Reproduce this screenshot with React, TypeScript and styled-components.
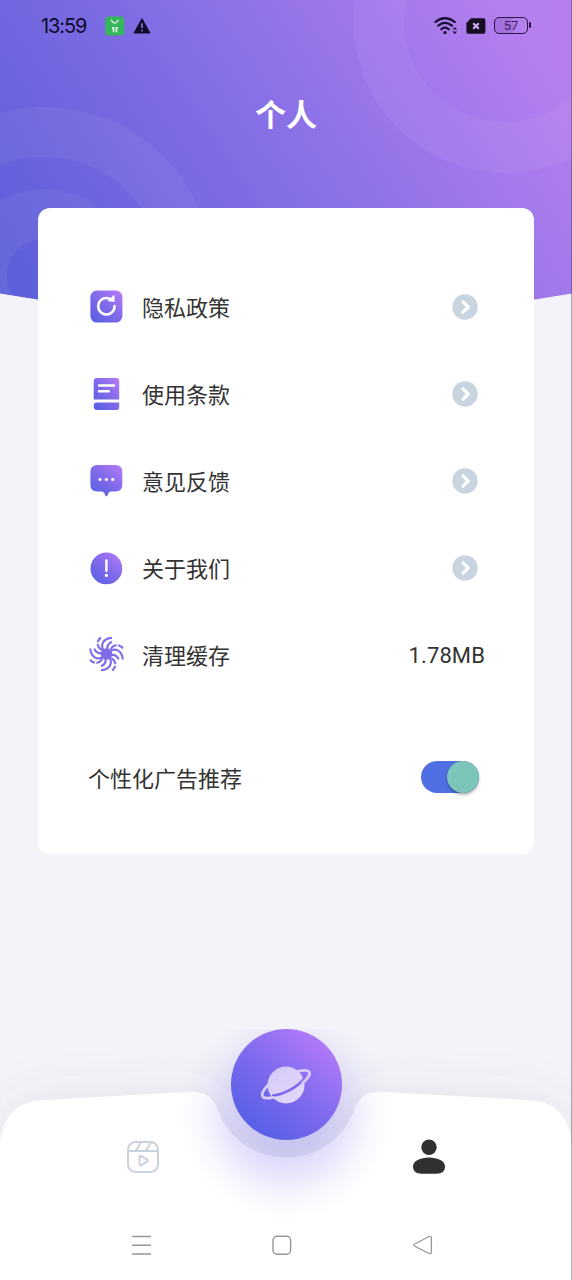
import React from "react";
import styled, { createGlobalStyle } from "styled-components";

const GlobalStyle = createGlobalStyle`
  body { margin: 0; background: #f3f3f9; }
  * { box-sizing: border-box; }
`;

const Screen = styled.main`
  position: relative;
  display: flex;
  flex-direction: column;
  width: 572px;
  height: 1280px;
  overflow: hidden;
  background: #f3f3f9;
  color: #333;
  font-family: Roboto, "Noto Sans CJK SC", sans-serif;
`;

const ScreenEdge = styled.i`
  position: absolute;
  top: 0;
  right: 0;
  width: 1px;
  height: 100%;
  background: rgba(50, 50, 60, 0.4);
`;

const HeaderArt = styled.svg`
  position: absolute;
  top: 0;
  left: 0;
`;

const StatusBar = styled.header`
  position: relative;
  display: flex;
  align-items: center;
  justify-content: space-between;
  height: 51px;
  padding: 0 42px 0 41px;
`;

const StatusGroup = styled.div<{ $gap: number }>`
  display: flex;
  align-items: center;
  gap: ${(p) => p.$gap}px;
`;

const Clock = styled.span`
  width: 56px;
  color: #0e0a2a;
  font: 400 20px/24px Inter, sans-serif;
  letter-spacing: -1.1px;
`;

const Battery = styled.div`
  position: relative;
  width: 34px;
  height: 17px;
  margin-right: 2px;
  border: 1.5px solid #2a1745;
  border-radius: 5px;
  background: linear-gradient(90deg, rgba(80, 40, 140, 0.16) 55%, transparent 55%);
  color: #3b2460;
  font: 400 13px/15px Roboto, sans-serif;
  text-align: center;

  &::after {
    content: "";
    position: absolute;
    top: 4px;
    right: -4px;
    width: 2px;
    height: 6px;
    border-radius: 1px;
    background: #2a1745;
  }
`;

const Title = styled.h1`
  position: relative;
  height: 46px;
  margin: 39px 0 72px;
  color: #fff;
  font: 700 31px/46px "Noto Sans CJK SC", sans-serif;
  text-align: center;
`;

const Card = styled.section`
  position: relative;
  width: 496px;
  height: 646px;
  margin-left: 38px;
  padding: 55px 49px 0 50px;
  border-radius: 12px;
  background: #fff;
`;

const Menu = styled.ul`
  display: flex;
  flex-direction: column;
  margin: 0;
  padding: 0;
  list-style: none;
`;

const MenuRow = styled.li`
  display: flex;
  align-items: center;
  height: 87.2px;
`;

const RowIcon = styled.svg`
  flex: none;
  width: 36px;
  height: 36px;
  margin-right: 18px;
`;

const RowLabel = styled.span`
  flex: 1;
  padding-top: 4px;
  font-size: 22px;
  line-height: 32px;
`;

const CacheSize = styled.span`
  padding-top: 2px;
  font-size: 22px;
  line-height: 32px;
  letter-spacing: 0.1px;
`;

const ArrowIcon = styled.svg`
  width: 26px;
  height: 26px;
  margin-right: 7px;
`;

const SwitchRow = styled.div`
  display: flex;
  align-items: center;
  height: 60px;
  margin-top: 49px;
`;

const Switch = styled.button`
  display: flex;
  justify-content: flex-end;
  width: 58px;
  height: 32px;
  margin: 0 6px 1px 0;
  padding: 0;
  border: 0;
  border-radius: 16px;
  background: #506fe3;
`;

const Knob = styled.span`
  width: 32px;
  height: 32px;
  border-radius: 50%;
  background: #7cc5bb;
  box-shadow: 0 2px 3px rgba(0, 0, 0, 0.3);
`;

const Dock = styled.footer`
  position: relative;
  display: flex;
  flex-direction: column;
  height: 260px;
  margin-top: auto;
`;

const DockArt = styled.svg`
  position: absolute;
  left: 0;
  bottom: 0;
  overflow: visible;
`;

const Tabs = styled.nav`
  position: relative;
  display: grid;
  grid-template-columns: repeat(3, 1fr);
  height: 190px;
  padding: 0 71.5px;
`;

const Tab = styled.button<{ $color: string }>`
  display: flex;
  justify-content: center;
  align-items: flex-start;
  padding: 119px 0 0;
  border: 0;
  background: none;
  color: ${(p) => p.$color};
`;

const ExploreButton = styled.button`
  display: flex;
  align-items: center;
  justify-content: center;
  justify-self: center;
  width: 111px;
  height: 111px;
  margin-top: 9px;
  padding: 0;
  border: 0;
  border-radius: 50%;
  background: linear-gradient(40deg, #5560e6 12%, #7f6aee 50%, #b67bfb 90%);
`;

const SystemNav = styled.div`
  position: relative;
  display: flex;
  align-items: center;
  justify-content: space-between;
  height: 70px;
  padding: 2px 138px 0 130px;
`;

const Gradient = ({ id }: { id: string }) => (
  <defs>
    <linearGradient id={id} x1="0.1" y1="0.95" x2="0.9" y2="0.05">
      <stop offset="0" stopColor="#5b60e3" />
      <stop offset="0.5" stopColor="#7e6aea" />
      <stop offset="1" stopColor="#b078f5" />
    </linearGradient>
  </defs>
);

const PrivacyIcon = () => (
  <RowIcon viewBox="0 0 36 36">
    <Gradient id="privacy" />
    <rect x="2.4" y="1.6" width="32" height="32" rx="6.5" fill="url(#privacy)" />
    <path d="M21.4 9.6A8.2 8.2 0 1 0 26.6 17" fill="none" stroke="#fff" strokeWidth="2.5" strokeLinecap="round" />
    <path d="M20.6 11.6L26 6.8V12.2Z" fill="#fff" stroke="#fff" strokeWidth="1.2" strokeLinejoin="round" />
  </RowIcon>
);

const TermsIcon = () => (
  <RowIcon viewBox="0 0 36 36">
    <Gradient id="terms" />
    <path d="M9 2H28.5Q31.2 2 31.2 5V23.5H5.7V5.5Q5.7 2 9 2ZM8.5 26.4H31.2V31Q31.2 34 28.5 34H9Q5.7 34 5.7 30.6Q5.7 26.4 8.5 26.4Z" fill="url(#terms)" />
    <path d="M11 9.5H26M11 15.2H20.8" stroke="#fff" strokeWidth="2.4" strokeLinecap="round" />
  </RowIcon>
);

const FeedbackIcon = () => (
  <RowIcon viewBox="0 0 36 36">
    <Gradient id="feedback" />
    <path d="M9.5 2H27.3Q34.3 2 34.3 9V21.5Q34.3 28.5 27.3 28.5H23Q21.3 28.5 20.5 30L19.3 32.7Q18.4 34 17.4 32.7L16.2 30Q15.4 28.5 13.8 28.5H9.5Q2.4 28.5 2.4 21.5V9Q2.4 2 9.5 2Z" fill="url(#feedback)" />
    <g fill="#fff">
      <circle cx="12" cy="16.5" r="1.6" />
      <circle cx="18.4" cy="16.5" r="1.6" />
      <circle cx="24.8" cy="16.5" r="1.6" />
    </g>
  </RowIcon>
);

const AboutIcon = () => (
  <RowIcon viewBox="0 0 36 36">
    <Gradient id="about" />
    <circle cx="18.4" cy="18.4" r="15.9" fill="url(#about)" />
    <path d="M18.4 10.5V20.8" stroke="#fff" strokeWidth="2.4" strokeLinecap="round" />
    <circle cx="18.4" cy="25.4" r="1.6" fill="#fff" />
  </RowIcon>
);

const CacheIcon = () => (
  <RowIcon viewBox="0 0 36 36">
    <g transform="translate(18.5 17)" fill="none" stroke="#806eea" strokeWidth="2.2" strokeLinecap="round">
      <circle r="5.8" fill="#7d6be8" stroke="none" />
      {[0, 90, 180, 270].map((angle) => (
        <g key={angle} transform={`rotate(${angle})`}>
          <path d="M-3 -3.5C-6.4 -9.5 -3 -15.2 4.6 -16.2" />
          <path d="M.8 -5C.6 -8 2 -10.5 4.6 -11.8" />
          <path d="M4.4 -5.4C7.4 -9.6 12.4 -10.2 16.2 -6" strokeDasharray="6 3.3 4 3" />
        </g>
      ))}
    </g>
  </RowIcon>
);

const ITEMS = [
  { label: "隐私政策", Icon: PrivacyIcon },
  { label: "使用条款", Icon: TermsIcon },
  { label: "意见反馈", Icon: FeedbackIcon },
  { label: "关于我们", Icon: AboutIcon },
  { label: "清理缓存", Icon: CacheIcon, value: "1.78MB" },
];

const Arrow = () => (
  <ArrowIcon viewBox="0 0 26 26">
    <circle cx="13" cy="13" r="12.7" fill="#c9d4e1" />
    <path d="M11 7.8L16.2 13L11 18.2" fill="none" stroke="#fff" strokeWidth="3.2" strokeLinecap="round" strokeLinejoin="round" />
  </ArrowIcon>
);

export default function App() {
  return (
    <>
      <GlobalStyle />
      <Screen>
        <HeaderArt width="572" height="320" viewBox="0 0 572 320">
          <defs>
            <linearGradient id="sky" gradientUnits="userSpaceOnUse" x1="40" y1="300" x2="500" y2="-10">
              <stop offset="0" stopColor="#5e5fda" />
              <stop offset="0.5" stopColor="#866fe6" />
              <stop offset="1" stopColor="#b57fee" />
            </linearGradient>
            <clipPath id="wave">
              <path d="M0 0H572V293.5Q286 342 0 293.5Z" />
            </clipPath>
          </defs>
          <g clipPath="url(#wave)">
            <rect width="572" height="320" fill="url(#sky)" />
            <g fill="none" stroke="#fff" strokeOpacity="0.05">
              <circle cx="44" cy="276" r="144" strokeWidth="50" />
              <circle cx="44" cy="276" r="62" strokeWidth="50" />
              <circle cx="505" cy="21" r="126.5" strokeWidth="51" />
            </g>
          </g>
        </HeaderArt>

        <StatusBar>
          <StatusGroup $gap={8}>
            <Clock>13:59</Clock>
            <svg width="20" height="20" viewBox="0 0 20 20">
              <rect x="0.3" y="0.5" width="19" height="19" rx="4" fill="#35b65c" />
              <path d="M6.2 4.2Q9.8 10 13.4 4.2" fill="none" stroke="#dff8df" strokeWidth="1.3" strokeLinecap="round" />
              <path d="M7 11H9.3V16.2H7.7V13H7ZM10.5 11H12.8V12.8H12.4V16.2H10.5Z" fill="#dff8df" />
            </svg>
            <svg width="18" height="16" viewBox="0 0 18 16">
              <path d="M9 .8L17 15H1Z" fill="#100b2b" stroke="#100b2b" strokeWidth="1" strokeLinejoin="round" />
              <path d="M9 5.2V10M9 11.7V13.3" stroke="#8975e6" strokeWidth="1.7" />
            </svg>
          </StatusGroup>
          <StatusGroup $gap={8}>
            <svg width="24" height="18" viewBox="0 0 24 18">
              <g fill="none" stroke="#170d30" strokeWidth="2.2" strokeLinecap="round">
                <path d="M1.4 5Q11 -2.6 20.8 5" />
                <path d="M4.2 8.7Q11 3.2 18 8.7" />
                <path d="M7.3 12.3Q11 9 14.8 12.3" />
              </g>
              <circle cx="11" cy="15.6" r="1.7" fill="#170d30" />
              <path d="M18.4 12.6L20.8 10L23.2 12.6ZM18.4 14.5L20.8 17.2L23.2 14.5Z" fill="#2b1848" />
            </svg>
            <svg width="20" height="16" viewBox="0 0 20 16">
              <path d="M5 .3H17.6Q19.4 .3 19.4 2V14Q19.4 15.8 17.6 15.8H2.2Q.4 15.8 .4 14V5Z" fill="#170d20" />
              <path d="M7.2 5.2L12.8 10.8M12.8 5.2L7.2 10.8" stroke="#c9aaf0" strokeWidth="2.2" />
            </svg>
            <Battery>57</Battery>
          </StatusGroup>
        </StatusBar>

        <Title>个人</Title>

        <Card>
          <Menu>
            {ITEMS.map(({ label, Icon, value }) => (
              <MenuRow key={label}>
                <Icon />
                <RowLabel>{label}</RowLabel>
                {value ? <CacheSize>{value}</CacheSize> : <Arrow />}
              </MenuRow>
            ))}
          </Menu>
          <SwitchRow>
            <RowLabel>个性化广告推荐</RowLabel>
            <Switch role="switch" aria-checked="true">
              <Knob />
            </Switch>
          </SwitchRow>
        </Card>

        <Dock>
          <DockArt width="572" height="260" viewBox="0 0 572 260">
            <defs>
              <filter id="soft" x="-20%" y="-50%" width="140%" height="200%">
                <feGaussianBlur stdDeviation="24" />
              </filter>
              <radialGradient id="glow" gradientUnits="userSpaceOnUse" cx="286" cy="94" r="106">
                <stop offset="0.3" stopColor="#6a5fe8" stopOpacity="0.28" />
                <stop offset="0.55" stopColor="#6a5fe8" stopOpacity="0.17" />
                <stop offset="0.8" stopColor="#6a5fe8" stopOpacity="0.05" />
                <stop offset="1" stopColor="#6a5fe8" stopOpacity="0" />
              </radialGradient>
              <path id="dock" d="M0 260V124C2 98 16 82 40 80.3L190 71.8C203 71 212 75 217.5 89C227 117 253 137.5 286 137.5C319 137.5 345 117 354.5 89C360 75 369 71 382 71.8L532 80.3C556 82 570 98 572 124V260Z" />
            </defs>
            <use href="#dock" fill="#555560" fillOpacity="0.1" filter="url(#soft)" />
            <use href="#dock" fill="#fff" />
            <rect x="176" y="9" width="220" height="191" fill="url(#glow)" />
          </DockArt>
          <Tabs>
            <Tab $color="#cad2de" aria-label="视频">
              <svg width="36" height="36" viewBox="0 0 36 36" fill="none" stroke="currentColor" strokeWidth="2" strokeLinecap="round" strokeLinejoin="round">
                <rect x="3" y="3" width="30" height="30" rx="7.5" />
                <path d="M3.5 12H32.5M11 11.5L16 3.5M21 11.5L26 3.5" />
                <path d="M14.5 17.8Q14.5 16.3 16 16.8L22.2 20.6Q23.5 21.6 22.2 22.6L16.5 26.2Q14.7 27 14.5 25.2Z" />
              </svg>
            </Tab>
            <ExploreButton aria-label="发现">
              <svg width="54" height="42" viewBox="0 0 54 42">
                <defs>
                  <linearGradient id="planet" x1="0" y1="0" x2="1" y2="1">
                    <stop offset="0" stopColor="#d2c9f7" />
                    <stop offset="1" stopColor="#e6d9fc" />
                  </linearGradient>
                  <mask id="ringCut">
                    <rect width="54" height="42" fill="#fff" />
                    <path d="M13 31.8C24 30.6 38 23.6 45.2 14.6" fill="none" stroke="#000" strokeWidth="2.6" />
                  </mask>
                </defs>
                <g mask="url(#ringCut)">
                  <circle cx="27" cy="21" r="18.5" fill="url(#planet)" />
                </g>
                <path d="M9.8 20.2C4.6 25.6 2.2 30.4 3.8 32.6C5.2 34.6 9 34.6 14 33.4M37.8 7.6C44 6 48.4 5.6 50 7.6C51.6 9.9 49 14.5 43.8 19" fill="none" stroke="#d8cdf8" strokeWidth="2.8" strokeLinecap="round" />
              </svg>
            </ExploreButton>
            <Tab $color="#303030" aria-label="个人">
              <svg width="36" height="38" viewBox="0 0 36 38" fill="currentColor">
                <circle cx="18" cy="8.2" r="7.7" />
                <path d="M18 18.5C27 18.5 34 22 34 27.5C34 32.6 30.5 34.7 25.5 34.7H10.5C5.5 34.7 2 32.6 2 27.5C2 22 9 18.5 18 18.5Z" />
              </svg>
            </Tab>
          </Tabs>
          <SystemNav>
            <svg width="22" height="22" viewBox="0 0 22 22" stroke="#969696" strokeWidth="1.4">
              <path d="M2 1.5H21M2 10.2H21M2 19H21" />
            </svg>
            <svg width="22" height="22" viewBox="0 0 22 22" fill="none" stroke="#969696" strokeWidth="1.4">
              <rect x="2" y="1.3" width="17.6" height="18" rx="4" />
            </svg>
            <svg width="22" height="22" viewBox="0 0 22 22" fill="none" stroke="#969696" strokeWidth="1.3" strokeLinejoin="round">
              <path d="M2.4 9.2L17 1.5Q19.4 .7 19.4 3V17Q19.4 19.3 17 18.5L2.4 11Q.8 10.1 2.4 9.2Z" />
            </svg>
          </SystemNav>
        </Dock>
        <ScreenEdge />
      </Screen>
    </>
  );
}
